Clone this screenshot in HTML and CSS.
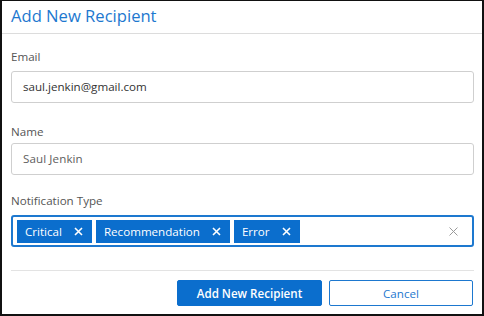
FILE: index.html
```html
<!DOCTYPE html>
<html>
<head>
<title>Add New Recipient</title>
<link rel="stylesheet" href="styles.css">
</head>
<body>
<div class="dialog">
    <div class="dialog-header">
        <h1 class="dialog-title">Add New Recipient</h1>
    </div>

    <div class="dialog-body">
        <div class="field field-email">
            <label class="field-label">Email</label>
            <div class="text-input">saul.jenkin@gmail.com</div>
        </div>

        <div class="field field-name">
            <label class="field-label">Name</label>
            <div class="text-input text-input-muted">Saul Jenkin</div>
        </div>

        <div class="field field-type">
            <label class="field-label">Notification Type</label>
            <div class="tag-input">
                <span class="tag">Critical
                    <svg class="tag-remove" width="9" height="9" viewBox="0 0 9 9"><path d="M1 1L8 8M8 1L1 8" stroke="#fff" stroke-width="1.6" fill="none"/></svg>
                </span>
                <span class="tag">Recommendation
                    <svg class="tag-remove" width="9" height="9" viewBox="0 0 9 9"><path d="M1 1L8 8M8 1L1 8" stroke="#fff" stroke-width="1.6" fill="none"/></svg>
                </span>
                <span class="tag">Error
                    <svg class="tag-remove" width="9" height="9" viewBox="0 0 9 9"><path d="M1 1L8 8M8 1L1 8" stroke="#fff" stroke-width="1.6" fill="none"/></svg>
                </span>
                <svg class="clear-all" width="9" height="9" viewBox="0 0 9 9"><path d="M0.5 0.5L8.5 8.5M8.5 0.5L0.5 8.5" stroke="#9a9a9a" stroke-width="1" fill="none"/></svg>
            </div>
        </div>
    </div>

    <div class="dialog-footer">
        <button class="btn btn-primary">Add New Recipient</button>
        <button class="btn btn-secondary">Cancel</button>
    </div>
</div>
</body>
</html>
```

FILE: styles.css
```css
body {
    margin: 0;
    font-family: "Open Sans", "Noto Sans", sans-serif;
    background-color: white;
}

.dialog {
    width: 484px;
    height: 316px;
    box-sizing: border-box;
    border: 2px solid #111;
    border-top-width: 1px;
    display: flex;
    flex-direction: column;
}

.dialog-header {
    height: 33px;
    box-sizing: border-box;
    padding: 3px 9px 0 9px;
    border-bottom: 1px solid #dcdcdc;
}

.dialog-title {
    margin: 0;
    font-size: 16.6px;
    line-height: 23px;
    font-weight: 400;
    color: #1d78cf;
}

.dialog-body {
    padding: 14px 8px 0 9px;
    flex: 1;
}

.field-label {
    display: block;
    font-size: 11.6px;
    line-height: 18px;
    color: #555;
    margin-bottom: 5px;
}

.field-name {
    margin-top: 20px;
}

.field-name .field-label {
    margin-bottom: 2px;
}

.field-type {
    margin-top: 17px;
}

.field-type .field-label {
    margin-bottom: 5px;
}

.text-input {
    height: 32px;
    box-sizing: border-box;
    border: 1px solid #cfcfcf;
    border-radius: 3px;
    padding: 0 11px;
    font-size: 11.6px;
    line-height: 30px;
    color: #333;
}

.text-input-muted {
    color: #5e5e5e;
    letter-spacing: 0.1px;
}

.tag-input {
    height: 32px;
    box-sizing: border-box;
    border: 2px solid #1d78cf;
    border-radius: 3px;
    padding: 3px 4px;
    display: flex;
    align-items: center;
    gap: 4px;
}

.tag {
    height: 23px;
    box-sizing: border-box;
    background-color: #0b6ecd;
    color: white;
    font-size: 11.6px;
    line-height: 23px;
    padding: 0 9px 0 8px;
    display: flex;
    align-items: center;
    gap: 12px;
}

.clear-all {
    margin-left: auto;
    margin-right: 10px;
}

.dialog-footer {
    margin: 0 8px 0 9px;
    border-top: 1px solid #e3e3e3;
    height: 44px;
    box-sizing: border-box;
    padding: 9px 1px 0 0;
    display: flex;
    justify-content: flex-end;
    gap: 7px;
}

.btn {
    height: 26px;
    font-family: "Open Sans", "Noto Sans", sans-serif;
    font-size: 11.6px;
    border-radius: 2px;
    padding: 0;
}

.btn-primary {
    width: 145px;
    background-color: #0b6ecd;
    border: 1px solid #0b6ecd;
    color: white;
    font-weight: 600;
}

.btn-secondary {
    width: 144px;
    background-color: white;
    border: 1px solid #1d78cf;
    color: #1d78cf;
}
```
